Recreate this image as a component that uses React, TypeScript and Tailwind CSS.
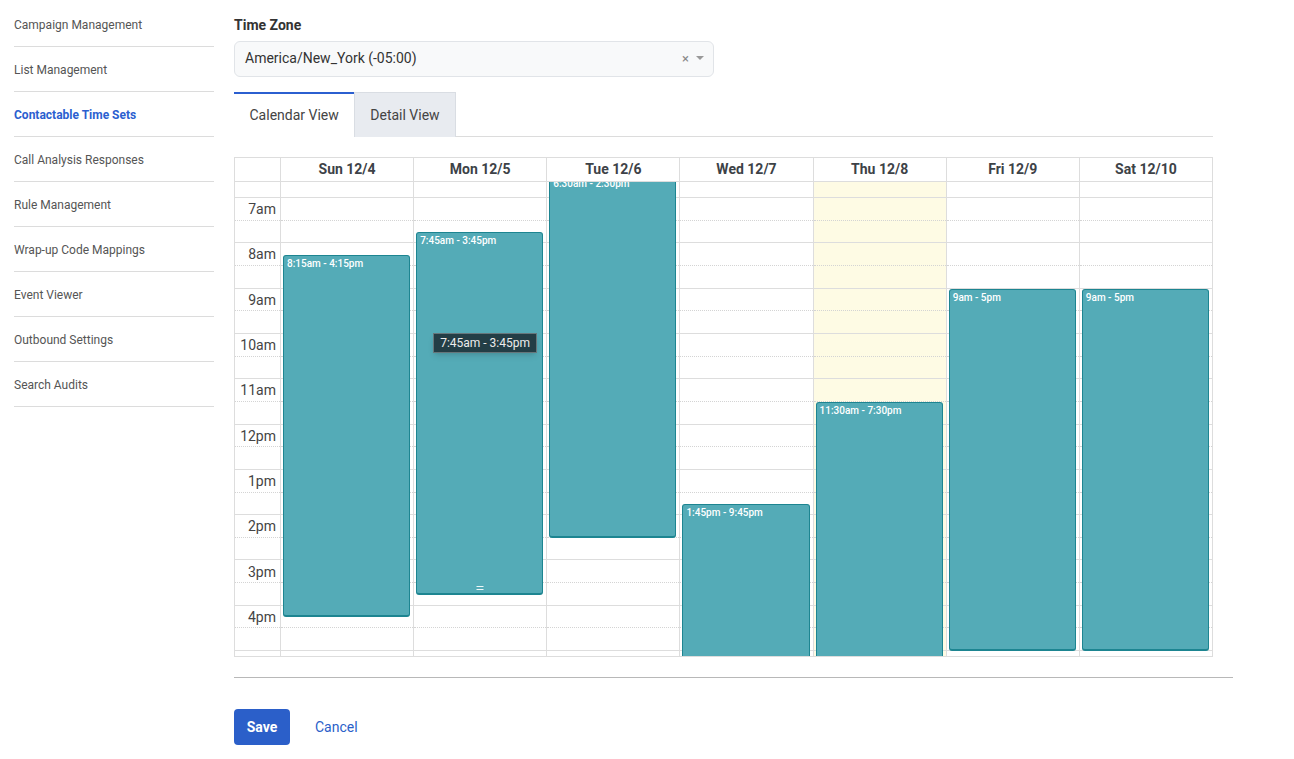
import React from "react";

const HOUR = 45.333;
const START = 6; // first rendered hour, scrolled partly out of view

const navItems = [
  "Campaign Management",
  "List Management",
  "Contactable Time Sets",
  "Call Analysis Responses",
  "Rule Management",
  "Wrap-up Code Mappings",
  "Event Viewer",
  "Outbound Settings",
  "Search Audits",
];

const days = [
  { label: "Sun 12/4", event: { start: 8.25, end: 16.25, text: "8:15am - 4:15pm" } },
  { label: "Mon 12/5", event: { start: 7.75, end: 15.75, text: "7:45am - 3:45pm" }, handle: true, tooltip: true },
  { label: "Tue 12/6", event: { start: 6.5, end: 14.5, text: "6:30am - 2:30pm" } },
  { label: "Wed 12/7", event: { start: 13.75, end: 21.75, text: "1:45pm - 9:45pm" } },
  { label: "Thu 12/8", event: { start: 11.5, end: 19.5, text: "11:30am - 7:30pm" }, today: true },
  { label: "Fri 12/9", event: { start: 9, end: 17, text: "9am - 5pm" } },
  { label: "Sat 12/10", event: { start: 9, end: 17, text: "9am - 5pm" } },
];

const hours = Array.from({ length: 13 }, (_, i) => START + i);

function hourLabel(h: number) {
  if (h > 16) return "";
  if (h === 12) return "12pm";
  return h > 12 ? `${h - 12}pm` : `${h}am`;
}

function Slots() {
  return (
    <>
      {hours.map((h) => (
        <div key={h}>
          <div className="h-[22.667px] border-b border-dotted border-[#d4d4d4]" />
          <div className="h-[22.667px] border-b border-[#dddddd]" />
        </div>
      ))}
    </>
  );
}

export default function App() {
  return (
    <div className="flex min-h-screen bg-white font-[Roboto,sans-serif] text-[#333]">
      <nav className="ml-[14px] w-[200px] shrink-0 pt-[2px]">
        {navItems.map((item) => {
          const active = item === "Contactable Time Sets";
          return (
            <div
              key={item}
              className={`flex h-[45px] items-center border-b border-[#dcdcdc] pt-[1px] text-[12px] ${
                active ? "font-bold text-[#2b5fd0]" : "text-[#555]"
              }`}
            >
              {item}
            </div>
          );
        })}
      </nav>

      <main className="ml-5 w-[999px] pt-[15px]">
        <div className="text-[14px] font-bold leading-5 text-[#333]">Time Zone</div>
        <div className="mt-[6px] flex h-[36px] w-[480px] items-center rounded-md border border-[#e1e4e8] bg-[#f8f9fa] pb-[2px] pl-[10px] pr-[9px] text-[14px] text-[#333]">
          <span className="flex-1">America/New_York (-05:00)</span>
          <span className="mr-[7px] text-[13px] leading-none text-[#888]">×</span>
          <span className="h-0 w-0 border-x-[4px] border-t-[4px] border-x-transparent border-t-[#999]" />
        </div>

        <div className="mt-[15px] flex w-[979px] border-b border-[#dcdcdc] text-[14px]">
          <div className="-mb-px flex h-[45px] items-center border-t-2 border-[#2b5fd0] bg-white px-[15.5px] text-[#444]">
            Calendar View
          </div>
          <div className="-mb-px flex h-[45px] items-center border border-b-0 border-[#d9dde3] bg-[#e8ebf0] px-[15px] text-[#444]">
            Detail View
          </div>
        </div>

        <div className="mt-5 w-[979px] border border-[#dddddd]">
          <div className="flex h-[24px] border-b border-[#dddddd]">
            <div className="w-[45px] shrink-0" />
            {days.map((d) => (
              <div
                key={d.label}
                className="flex flex-1 items-center justify-center border-l border-[#dddddd] text-[14px] font-bold text-[#3d4247]"
              >
                {d.label}
              </div>
            ))}
          </div>

          <div className="flex h-[474px] overflow-hidden">
            <div className="relative -mt-[29.333px] w-[45px] shrink-0">
              <Slots />
              <div className="absolute inset-x-0 top-0">
                {hours.map((h) => (
                  <div key={h} className="h-[45.333px]">
                    <div className="h-[22.667px] pr-[4px] text-right text-[14px] leading-[22px] text-[#444]">
                      {hourLabel(h)}
                    </div>
                  </div>
                ))}
              </div>
            </div>

            {days.map((d) => (
              <div
                key={d.label}
                className={`relative -mt-[29.333px] flex-1 border-l border-[#dddddd] ${
                  d.today ? "bg-[#fefbe4]" : ""
                }`}
              >
                <Slots />
                <div
                  className="absolute left-[2px] right-[3px] overflow-hidden rounded-[3px] border border-b-2 border-[#1d8591] bg-[#54abb7] px-[3px] pt-[2px] text-[10px] font-medium leading-[12px] text-white"
                  style={{
                    top: (d.event.start - START) * HOUR,
                    height: (d.event.end - d.event.start) * HOUR,
                  }}
                >
                  {d.event.text}
                  {d.handle && (
                    <div className="absolute bottom-[3px] left-1/2 h-[4px] w-[7px] -translate-x-1/2 border-y border-white/90" />
                  )}
                </div>
                {d.tooltip && (
                  <div className="absolute left-[19px] top-[180px] border border-[#66767b] bg-[#233e46] px-[6px] py-[1px] text-[12px] leading-[16px] whitespace-nowrap text-[#ececec] shadow-md">
                    7:45am - 3:45pm
                  </div>
                )}
              </div>
            ))}
          </div>
        </div>

        <div className="mt-5 border-t border-[#b8b8b8]" />

        <div className="mt-[31px] flex items-center gap-[25px] text-[14px]">
          <button className="h-[36px] w-[56px] rounded-[4px] bg-[#2b5fc9] font-bold text-white">
            Save
          </button>
          <button className="text-[#2b5fc9]">Cancel</button>
        </div>
      </main>
    </div>
  );
}
